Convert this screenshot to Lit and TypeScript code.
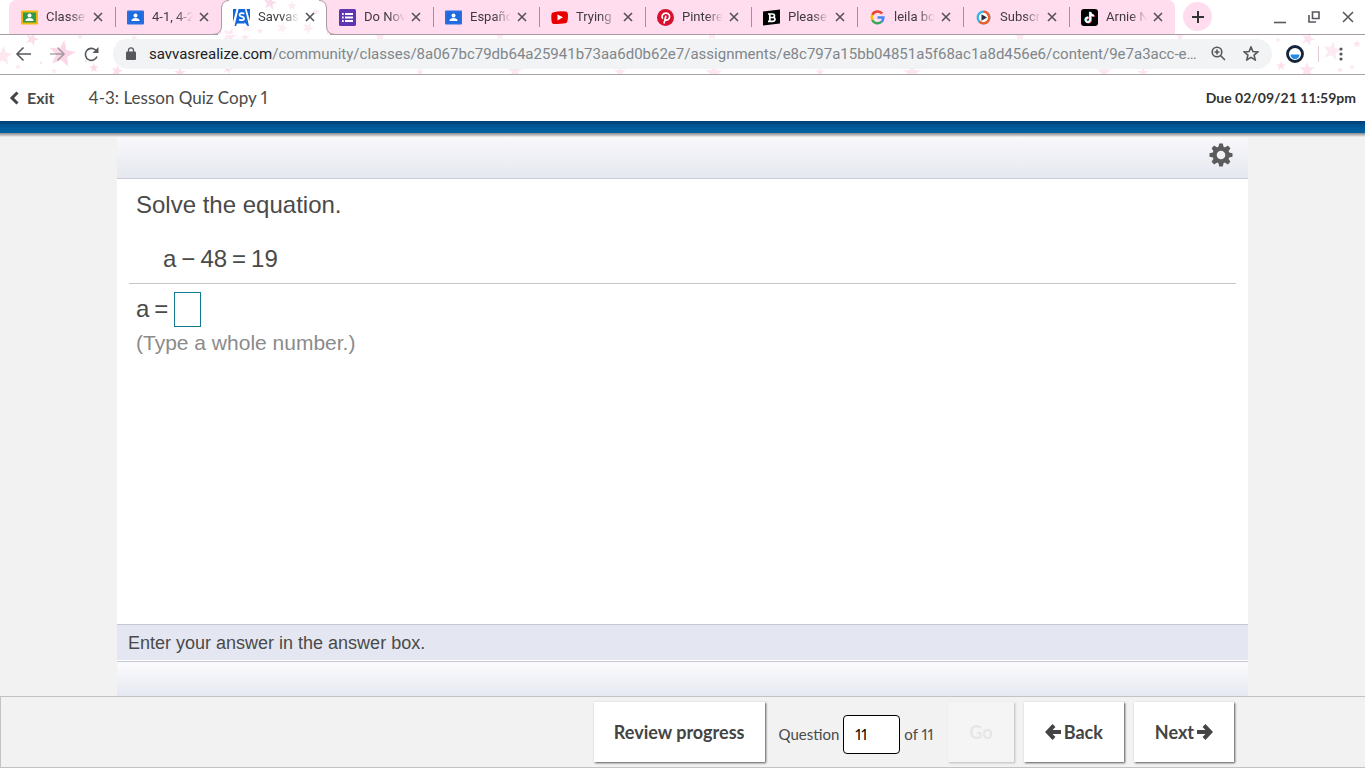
import { LitElement, html, css, svg } from "lit";
import { customElement } from "lit/decorators.js";

const person = (bg: string, frame: string) => svg`
  <rect width="17" height="14" y="1.5" rx="1" fill=${frame}></rect>
  <rect x="2" y="3.5" width="13" height="10" fill=${bg}></rect>
  <circle cx="8.5" cy="6.500" r="2" fill="#fff"></circle>
  <path d="M4.300 12c0-4 8.400-4 8.400 0z" fill="#fff"></path>`;

const icons = {
  classroom: person("#2f9a4c", "#f2b90c"),
  people: person("#1b6ae0", "#2a6fe0"),
  savvas: svg`<rect width="17" height="17" fill="#1466dc"></rect>
    <path d="M3.500 0H5.500L1.500 17H0V13zM12 0H13.500L17 12V17H16z" fill="#fff"></path>
    <path d="M3 17L4 14.500H12L11 12.500L14.500 17z" fill="#fff"></path>
    <path d="M11.300 4.800c-2-1.300-4.800-.7-4.800 1.200 0 2.300 4.600 1.200 4.600 3.400 0 1.900-2.800 2.400-5 1" fill="none" stroke="#fff" stroke-width="1.800"></path>`,
  forms: svg`<rect width="17" height="17" rx="1.500" fill="#5e35b1"></rect>
    <path d="M3 5h1.700M3 8.500h1.700M3 12h1.700M6 5h8M6 8.500h8M6 12h8" stroke="#fff" stroke-width="1.800"></path>`,
  youtube: svg`<path d="M2 3.500Q8.500 1.500 15 2.500q1.500.3 1.800 2 .5 4-.5 8-.4 1.500-2 1.800-6 1-11.500.7Q1 15 .7 13 0 9 .5 5q.2-1.300 1.500-1.500z" fill="#e80000"></path>
    <path d="M6.500 5.500v6L12 8.300z" fill="#fff"></path>`,
  pinterest: svg`<circle cx="8.500" cy="8.500" r="8.500" fill="#d8102f"></circle>
    <path d="M5.800 9.700C4 7.700 5.500 4.200 8.900 4.200c3 0 4.300 2.300 3.400 4.800-.9 2.500-3.300 2.500-4.100 1.200M8.900 6.700L7 14.500" fill="none" stroke="#fff" stroke-width="1.700"></path>`,
  brainly: svg`<path d="M0 2.500L17 .5v14L0 16.500z" fill="#000"></path>
    <path d="M5 5h4.500c2.600 0 2.600 3.200.6 3.400 2.600.3 2.500 4-.6 4H5M6.800 5v7.400M7 8.500h3" fill="none" stroke="#fff" stroke-width="1.700"></path>`,
  google: svg`<g fill="none" stroke-width="2.500"><path d="M13.200 4.500A6 6 0 0 0 3.200 6" stroke="#ea4335"></path>
    <path d="M3.300 5.700a6 6 0 0 0 0 5.600" stroke="#fbbc05"></path>
    <path d="M3.200 11a6 6 0 0 0 9.200 1.900" stroke="#34a853"></path>
    <path d="M12.200 13.100A6 6 0 0 0 14.400 8.500H8.500" stroke="#4285f4"></path></g>`,
  player: svg`<circle cx="8.500" cy="8.500" r="5.800" fill="#fff" stroke="#35b5e5" stroke-width="2.300"></circle>
    <path d="M8.500 2.700a5.800 5.800 0 1 1-4.100 9.900" fill="none" stroke="#f0602c" stroke-width="2.300"></path>
    <path d="M6.500 5.200v6.600l5.500-3.300z" fill="#2b2b3c"></path>`,
  tiktok: svg`<rect width="17" height="17" rx="3" fill="#000"></rect>
    <path d="M9.300 3v7.800a2.300 2.300 0 1 1-2-2.300M9.300 3.500c.3 2 1.600 3 3.600 3.200" fill="none" stroke="#f04a6c" stroke-width="1.800" transform="translate(.8 .5)"></path>
    <path d="M9.300 3v7.800a2.300 2.300 0 1 1-2-2.300M9.300 3.500c.3 2 1.600 3 3.600 3.200" fill="none" stroke="#5ee" stroke-width="1.800" transform="translate(-.5 -.2)"></path>
    <path d="M9.300 3v7.800a2.300 2.300 0 1 1-2-2.300M9.300 3.500c.3 2 1.600 3 3.600 3.200" fill="none" stroke="#fff" stroke-width="1.800"></path>`,
};

const tabs: { title: string; icon: keyof typeof icons; active?: boolean }[] = [
  { title: "Classe", icon: "classroom" },
  { title: "4-1, 4-2", icon: "people" },
  { title: "Savvas", icon: "savvas", active: true },
  { title: "Do Nov", icon: "forms" },
  { title: "Españo", icon: "people" },
  { title: "Trying", icon: "youtube" },
  { title: "Pintere", icon: "pinterest" },
  { title: "Please", icon: "brainly" },
  { title: "leila bo", icon: "google" },
  { title: "Subscr", icon: "player" },
  { title: "Arnie N", icon: "tiktok" },
];

const starPoints = (cx: number, cy: number, r: number, turn: number) =>
  Array.from({ length: 10 }, (_, i) => {
    const a = ((i * 36 + turn) * Math.PI) / 180;
    const d = i % 2 ? r * 0.42 : r;
    return `${(cx + d * Math.sin(a)).toFixed(1)},${(cy - d * Math.cos(a)).toFixed(1)}`;
  }).join(" ");

// x, y, radius, rotation, opacity
const stars: number[][] = [
  [62, 54, 14, 10, 1], [32, 39, 7, 20, 0.8], [3, 56, 10, 5, 0.6], [80, 37, 3, 0, 0.6],
  [18, 67, 3, 9, 0.6], [54, 71, 3, 0, 0.6], [94, 68, 5, 0, 0.9], [117, 71, 6, 12, 0.8],
  [120, 44, 5, 0, 0.5], [134, 38, 4, 20, 0.5], [86, 61, 2, 0, 0.8], [41, 63, 2, 0, 0.8],
  [230, 35, 8, 20, 0.6], [246, 28, 5, 0, 0.4], [270, 3, 7, 10, 0.9], [292, 6, 5, 0, 0.5],
  [308, 28, 6, 30, 0.5], [260, 31, 3, 0, 0.7], [282, 28, 6, 15, 0.4], [316, 12, 4, 0, 0.5],
  [180, 73, 6, 0, 0.8], [228, 69, 5, 20, 0.8],
  [245, 38, 5, 0, 0.6], [380, 36, 6, 0, 0.6], [420, 72, 4, 0, 0.6], [515, 71, 8, 0, 0.6],
  [500, 36, 5, 0, 0.5], [620, 72, 6, 0, 0.6], [714, 73, 9, 0, 0.6], [712, 35, 6, 0, 0.6],
  [820, 72, 5, 0, 0.6], [912, 73, 9, 0, 0.6], [1020, 36, 6, 0, 0.6], [1104, 72, 7, 0, 0.6],
  [1143, 73, 6, 0, 0.6], [1180, 37, 4, 0, 0.6], [1281, 66, 5, 0, 0.8], [1307, 70, 8, 0, 0.7],
  [1308, 39, 7, 20, 0.7], [1332, 51, 10, 10, 0.5], [1357, 44, 4, 0, 0.7], [1340, 70, 3, 0, 0.7],
  [1352, 67, 3, 0, 0.5], [1278, 40, 3, 0, 0.5],
];

const cross = html`<svg class="cross" viewBox="0 0 10 10" width="10" height="10" aria-hidden="true"><path d="M1 1l8 8M9 1l-8 8"></path></svg>`;

// A separator sits before each tab whose neighbours are both inactive.
const tabClass = (i: number) => {
  if (tabs[i].active) return "tab active";
  if (i > 0 && !tabs[i - 1].active) return "tab divided";
  return "tab";
};

@customElement("app-root")
export class AppRoot extends LitElement {
  static styles = css`
    :host { display: flex; flex-direction: column; height: 100vh; overflow: hidden; background: #f2f2f2; color: #4a4a4a; font-family: "Liberation Sans", Arial, sans-serif; }
    * { box-sizing: border-box; }
    button { font: inherit; color: inherit; border: 0; background: none; padding: 0; }
    svg { display: block; flex: none; }
    .browser { position: relative; background: #fff; font-family: Roboto, sans-serif; flex: none; }
    .stars { position: absolute; top: 0; left: 0; fill: #fbd7e8; }
    .strip { position: relative; display: flex; height: 35px; padding-left: 9px; border-bottom: 1px solid #a89ca3; }
    .tab { position: relative; display: flex; align-items: center; flex: 0 1 106px; min-width: 0; height: 34px; padding: 0 12px; background: #ffdcee; font-size: 13px; line-height: 16px; }
    .tab:first-child { border-top-left-radius: 7px; }
    .tab:nth-last-child(3) { border-top-right-radius: 7px; }
    .tab.divided::before { content: ""; position: absolute; left: 0; top: 7px; width: 1px; height: 20px; background: #a58e9a; }
    .tab.active { background: none; }
    .outline { position: absolute; left: -8px; top: 0; width: 122px; height: 35px; z-index: 1; }
    .title { flex: 1; min-width: 0; margin: 0 2px 0 8px; white-space: nowrap; color: #3f3a41; mask-image: linear-gradient(90deg, #000 24px, transparent 41px); }
    .cross { fill: none; stroke: #55505a; stroke-width: 1.6; }
    .front { position: relative; z-index: 2; }
    .new { display: grid; place-items: center; width: 29px; height: 29px; margin: 2px 0 0 8px; border-radius: 50%; background: #ffdcee; }
    .new svg { stroke: #333; stroke-width: 2; }
    .window { display: flex; align-items: center; gap: 22px; margin-left: auto; padding-right: 11px; }
    .line { fill: none; stroke: #55585c; stroke-width: 1.6; }
    .bar { position: relative; display: flex; align-items: center; height: 40px; padding: 0 16px 2px 15px; border-bottom: 1px solid #a9a4a8; }
    .nav { display: flex; gap: 17px; margin-right: 13px; }
    .omni { display: flex; align-items: center; flex: 1; min-width: 0; height: 30px; padding: 0 13px; border-radius: 15px; background: #f1f3f4; }
    .url { flex: 1; min-width: 0; height: 24px; margin: 0 10px 0 13px; overflow: hidden; text-overflow: ellipsis; white-space: nowrap; font-size: 15px; line-height: 24px; color: #80868b; }
    .host { color: #202124; }
    .tools { display: flex; gap: 17px; }
    .ext { display: flex; align-items: center; gap: 14px; margin-left: 14px; }
    .rule { width: 1px; height: 16px; background: #e6c9d8; }
    .top { display: flex; align-items: center; flex: none; height: 46px; padding: 0 9px; background: #fff; font-family: Lato, sans-serif; font-size: 16px; line-height: 20px; }
    .exit { display: flex; align-items: center; gap: 8px; font-weight: 700; }
    .lesson { margin: 0 0 0 34px; font-size: 17px; font-weight: 400; font-variant-numeric: proportional-nums; }
    .due { margin-left: auto; font-size: 14px; font-weight: 700; color: #333; }
    .blue { flex: none; height: 16px; background: linear-gradient(#003d6e 0, #00538f 4px, #0460a0 10px, #0460a0 12px, #8b8b8f 12px, #b9b9b9 14px, #f2f2f2 16px); }
    .player { display: flex; flex-direction: column; flex: 1; width: calc(100% - 234px); margin: 0 auto; background: #fff; min-height: 0; }
    .head { display: flex; justify-content: flex-end; align-items: center; height: 42px; padding: 0 15px 6px; background: linear-gradient(#f8f8fb, #e6e8f0); border-bottom: 1px solid #c9cbdc; }
    .work { flex: 1; padding: 12px 12px 0; }
    .prompt, .equation, .answer, .hint { margin: 0; padding: 0 7px; font-size: 24px; line-height: 28px; }
    .equation { margin-top: 26px; padding-left: 34px; }
    .equation, .answer label { display: flex; gap: 5px; }
    .divider { height: 1px; margin: 10px 0 8px; border: 0; background: #c6c6c6; }
    .answer { display: flex; align-items: center; gap: 6px; }
    .answer label { padding-bottom: 2px; }
    .box { width: 27px; height: 35px; padding: 2px; border: 1px solid #147a8f; background: #fff; font: inherit; outline: 0; }
    .hint { margin-top: 4px; font-size: 21px; line-height: 24px; color: #8b8b8b; }
    .status { height: 37px; margin: 0; padding: 0 11px; border-top: 1px solid #c5c8d8; border-bottom: 1px solid #fff; background: #e4e7f1; font-size: 18px; line-height: 36px; }
    .tail { height: 35px; border-top: 1px solid #c5c8d8; background: linear-gradient(#fbfbfd, #e6e9f2); }
    .foot { display: flex; align-items: center; justify-content: flex-end; flex: none; height: 72px; padding: 0 131px 0 0; border: 1px solid #c3c3c5; border-right: 0; font-family: Lato, sans-serif; font-size: 15px; line-height: 20px; font-variant-numeric: proportional-nums; }
    .btn { display: flex; align-items: center; justify-content: center; gap: 3px; height: 60px; padding: 0 21px; background: #fff; box-shadow: 1px 1px 2px #555; font-size: 18px; font-weight: 700; color: #444; }
    .review { padding: 0 20px; }
    .off { margin: 0 10px 0 15px; background: #f5f5f5; box-shadow: 1px 1px 2px #bbb; color: #e6e6e6; }
    .next { margin-left: 10px; }
    .count { display: flex; align-items: center; gap: 4px; margin-left: 14px; padding-top: 4px; }
    .num { width: 57px; height: 39px; padding: 0 11px; border: 1px solid #000; border-radius: 4px; background: #fff; font: inherit; font-variant-numeric: inherit; color: #000; }
  `;

  render() {
    return html`
      <header class="browser">
        <svg class="stars" width="1365" height="74" aria-hidden="true">
          ${stars.map(([x, y, r, t, o]) => svg`<polygon points=${starPoints(x, y, r, t)} opacity=${o}></polygon>`)}
        </svg>
        <div class="strip">
          ${tabs.map((t, i) => html`
            <div class=${tabClass(i)}>
              ${t.active ? html`<svg class="outline" viewBox="0 0 122 35" aria-hidden="true">
                <path d="M0 0H16Q9 1 9 8V27Q9 34 0 34.500zM122 0H106Q113 1 113 8V27Q113 34 122 34.500z" fill="#ffdcee"></path>
                <path d="M5 34.500H117" stroke="#fff" stroke-width="1"></path>
                <path d="M0 34.500Q8.500 34 8.500 26V8Q9 .5 16 .5M122 34.500Q113.500 34 113.500 26V8Q113 .5 106 .5" fill="none" stroke="#a89ca3"></path></svg>` : ""}
              <svg class="front" width="17" height="17" viewBox="0 0 17 17" aria-hidden="true">${icons[t.icon]}</svg>
              <span class="title">${t.title}</span>
              <button class="front" aria-label="Close tab">${cross}</button>
            </div>`)}
          <button class="new" aria-label="New tab"><svg class="line" width="12" height="12"><path d="M6 0v12M0 6h12"></path></svg></button>
          <div class="window">
            <button aria-label="Minimize"><svg class="line" width="12" height="14"><path d="M0 12.500h12"></path></svg></button>
            <button aria-label="Restore"><svg class="line" width="12" height="12"><path d="M4.500 1h6.500v6.500h-6.500zM1 4v7h7"></path></svg></button>
            <button aria-label="Close"><svg class="line" width="12" height="12"><path d="M1 1l10 10M11 1L1 11"></path></svg></button>
          </div>
        </div>
        <div class="bar">
          <div class="nav">
            <button aria-label="Back"><svg class="line" width="17" height="16"><path d="M16 8H2M8.500 1.500L2 8l6.500 6.500"></path></svg></button>
            <button aria-label="Forward"><svg class="line" width="17" height="16" opacity=".5"><path d="M1 8h14M8.500 1.500L15 8l-6.500 6.500"></path></svg></button>
            <button aria-label="Reload"><svg class="line" width="17" height="16"><path d="M14 10.500A6 6 0 1 1 12.500 4l2 1.500"></path><path d="M15.500 1v6H9.500z" fill="#55585c" stroke="none"></path></svg></button>
          </div>
          <div class="omni">
            <svg width="10" height="13" viewBox="0 0 10 13" fill="#55585c" aria-hidden="true"><rect y="4.500" width="10" height="8.500" rx="1"></rect><path d="M2.500 5V3.300a2.500 2.500 0 0 1 5 0V5" fill="none" stroke="#55585c" stroke-width="1.300"></path></svg>
            <div class="url"><span class="host">savvasrealize.com</span>/community/classes/8a067bc79db64a25941b73aa6d0b62e7/assignments/e8c797a15bb04851a5f68ac1a8d456e6/content/9e7a3acc-ece...</div>
            <div class="tools">
              <button aria-label="Zoom"><svg class="line" width="15" height="15"><circle cx="6" cy="6" r="4.800"></circle><path d="M9.500 9.500L14 14M3.500 6h5M6 3.500v5"></path></svg></button>
              <button aria-label="Bookmark"><svg class="line" width="16" height="15"><path d="M8 1l1.900 4.500 4.900.4-3.700 3.200 1.100 4.800L8 11.400l-4.200 2.500 1.100-4.800L1.200 5.900l4.900-.4z"></path></svg></button>
            </div>
          </div>
          <div class="ext">
            <svg width="18" height="18" aria-hidden="true"><circle cx="9" cy="9" r="7.500" fill="#fff" stroke="#12253d" stroke-width="2.800"></circle><path d="M4.500 9.500h9a4.500 4.500 0 0 1-9 0z" fill="#2488e8"></path></svg>
            <span class="rule"></span>
            <button aria-label="Menu"><svg width="16" height="14" fill="#55585c"><circle cx="8" cy="2" r="1.600"></circle><circle cx="8" cy="7" r="1.600"></circle><circle cx="8" cy="12" r="1.600"></circle></svg></button>
          </div>
        </div>
      </header>
      <div class="top">
        <button class="exit"><svg width="10" height="14" fill="none" stroke="#444" stroke-width="3" aria-hidden="true"><path d="M8.500 1.500L3 7l5.500 5.500"></path></svg>Exit</button>
        <h1 class="lesson">4-3: Lesson Quiz Copy 1</h1>
        <span class="due">Due 02/09/21 11:59pm</span>
      </div>
      <div class="blue"></div>
      <main class="player">
        <div class="head"><button aria-label="Settings"><svg width="24" height="24" viewBox="-12 -12 24 24"><g fill="#5b5b5b">${[0, 45, 90, 135].map((a) => svg`<path d="M-2.600 -8L-1.800 -11.500H1.800L2.600 -8V8L1.800 11.500H-1.800L-2.600 8z" transform="rotate(${a})"></path>`)}<circle r="8.500"></circle></g><circle r="4.300" fill="#f1f2f7"></circle></svg></button></div>
        <section class="work">
          <p class="prompt">Solve the equation.</p>
          <p class="equation"><span>a</span><span>−</span><span>48</span><span>=</span><span>19</span></p>
          <hr class="divider">
          <div class="answer"><label for="answer"><span>a</span><span>=</span></label><input id="answer" class="box" type="text"></div>
          <p class="hint">(Type a whole number.)</p>
        </section>
        <p class="status">Enter your answer in the answer box.</p>
        <div class="tail"></div>
      </main>
      <footer class="foot">
        <button class="btn review">Review progress</button>
        <div class="count"><label for="question">Question</label><input id="question" class="num" type="text" value="11"><span>of 11</span></div>
        <button class="btn off" disabled>Go</button>
        <button class="btn"><svg width="16" height="16" fill="none" stroke="#444" stroke-width="4" aria-hidden="true"><path d="M16 8H3M9 1.500L2.800 8 9 14.500"></path></svg>Back</button>
        <button class="btn next">Next<svg width="16" height="16" fill="none" stroke="#444" stroke-width="4" aria-hidden="true"><path d="M0 8h13M7 1.500L13.200 8 7 14.500"></path></svg></button>
      </footer>`;
  }
}
